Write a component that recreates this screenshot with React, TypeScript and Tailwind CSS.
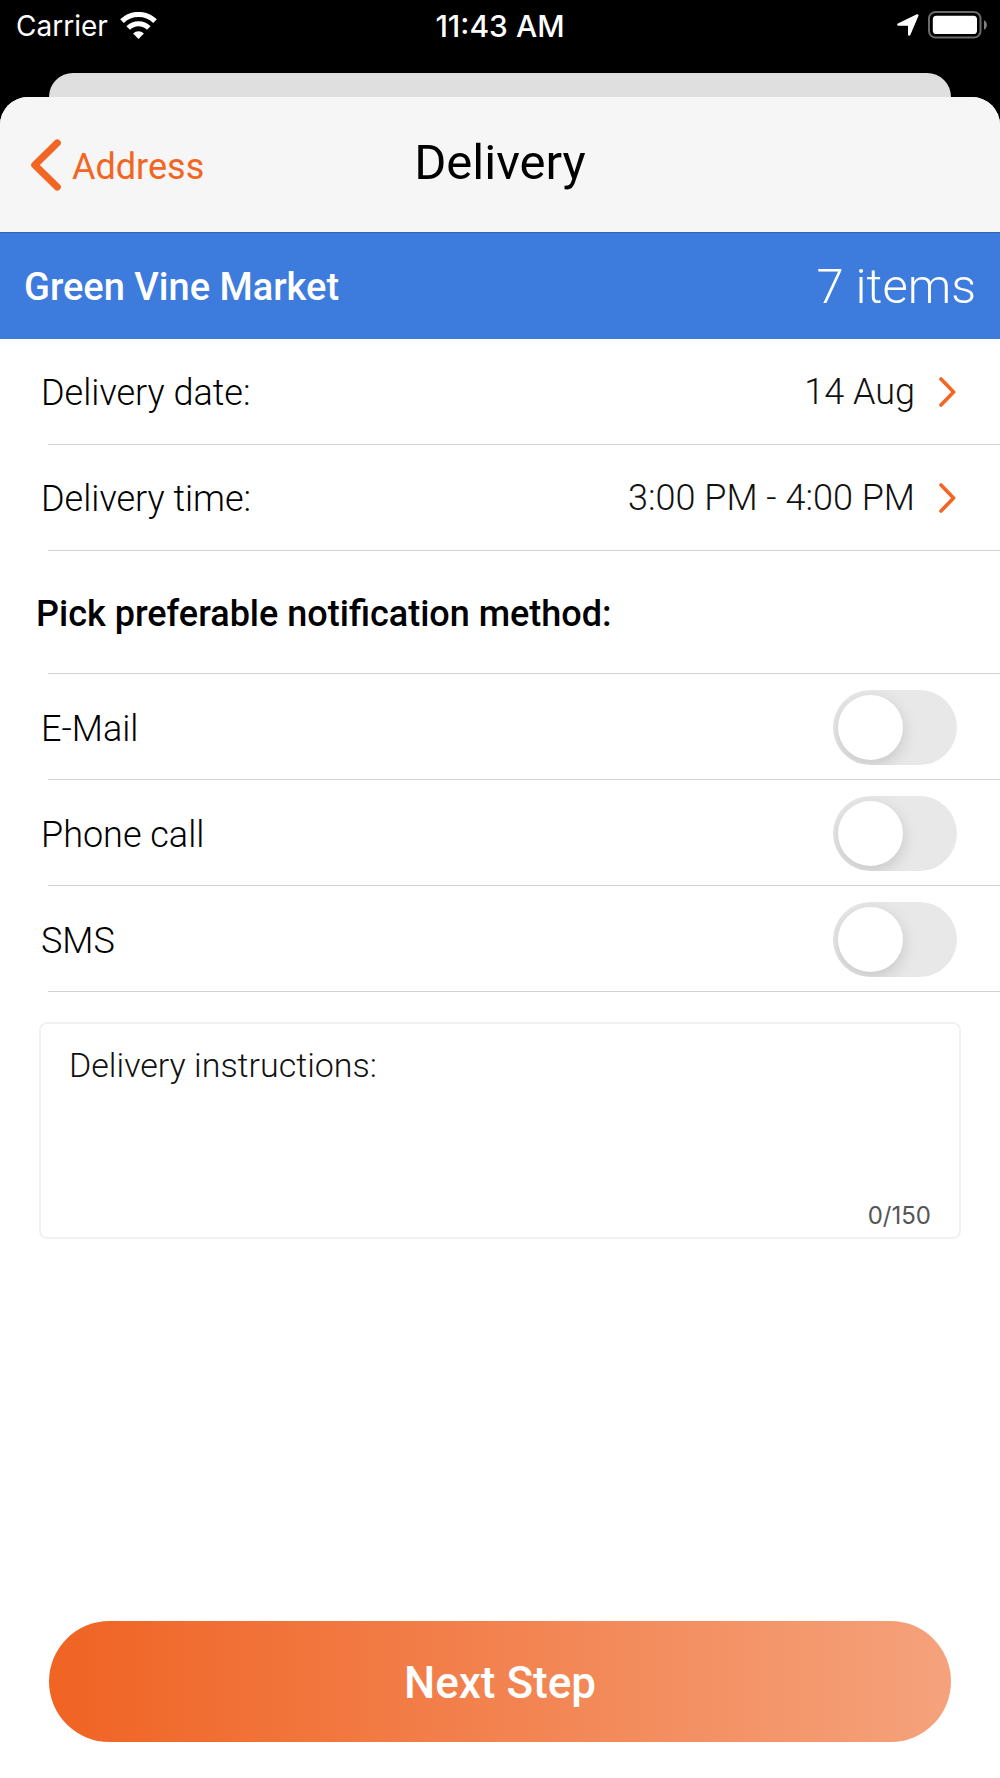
import { useState } from "react";

const ROBOTO = "font-['Roboto',sans-serif]";
const INTER = "font-['Inter',sans-serif]";

type Method = "email" | "phone" | "sms";

const METHODS: { id: Method; label: string }[] = [
  { id: "email", label: "E-Mail" },
  { id: "phone", label: "Phone call" },
  { id: "sms", label: "SMS" },
];

const MAX_LENGTH = 150;

function WifiIcon() {
  return (
    <svg width="37" height="27" viewBox="0 0 37 27" fill="none" aria-hidden="true">
      <path d="M2 9.2a23.6 23.6 0 0 1 33 0" stroke="#fff" strokeWidth="5.2" />
      <path d="M8.2 16.1a14.6 14.6 0 0 1 20.6 0" stroke="#fff" strokeWidth="5" />
      <path d="M18.5 27l-5.4-5.6a7.8 7.8 0 0 1 10.8 0z" fill="#fff" />
    </svg>
  );
}

function LocationIcon() {
  return (
    <svg width="24" height="24" viewBox="0 0 24 24" aria-hidden="true">
      <path
        d="M21.4 2.4L13.2 21.6V12.2L12 11.6H2.4z"
        fill="#fff"
        stroke="#fff"
        strokeWidth="2.4"
        strokeLinejoin="round"
      />
    </svg>
  );
}

function BatteryIcon() {
  return (
    <svg width="60" height="28" viewBox="0 0 60 28" aria-hidden="true">
      <rect x="1" y="1" width="51.5" height="25.5" rx="6.5" fill="none" stroke="#6b6b6b" strokeWidth="2" />
      <rect x="4.8" y="4.8" width="44.2" height="18.2" rx="3.6" fill="#fff" />
      <path d="M56 9.2c3.8 1.8 3.8 7.8 0 9.6z" fill="#808080" />
    </svg>
  );
}

function StatusBar() {
  return (
    <div
      className={`grid h-[50px] grid-cols-[1fr_auto_1fr] items-center px-3 text-[28px] leading-8 text-white ${INTER}`}
    >
      <div className="flex items-center gap-3 pl-1">
        <span className="pt-0.5">Carrier</span>
        <WifiIcon />
      </div>
      <span className="pt-0.5 text-[30px] font-medium">11:43 AM</span>
      <div className="flex items-center justify-end gap-2">
        <LocationIcon />
        <BatteryIcon />
      </div>
    </div>
  );
}

function DetailRow({ label, value }: { label: string; value: string }) {
  return (
    <>
      <button
        type="button"
        className="flex h-[105px] w-full items-center justify-between pr-11 pl-[41px] text-[36px] font-light"
      >
        <span className="pt-0.5">{label}</span>
        <span className="flex items-center gap-6 text-[#111]">
          {value}
          <svg width="17" height="30" viewBox="0 0 17 30" fill="none" aria-hidden="true">
            <path
              d="M2 2l12.6 13L2 28"
              stroke="#f26522"
              strokeWidth="3.6"
              strokeLinecap="round"
              strokeLinejoin="round"
            />
          </svg>
        </span>
      </button>
      <hr className="ml-12 border-[#d2d2d2]" />
    </>
  );
}

function ToggleRow({
  label,
  checked,
  onChange,
}: {
  label: string;
  checked: boolean;
  onChange: (next: boolean) => void;
}) {
  return (
    <>
      <label className="flex h-[105px] cursor-pointer items-center justify-between pt-0.5 pr-[43px] pl-[41px] text-[36px] font-light">
        <span className="pt-0.5">{label}</span>
        <input
          type="checkbox"
          role="switch"
          checked={checked}
          onChange={(e) => onChange(e.target.checked)}
          className="h-[75px] w-[124px] appearance-none overflow-hidden rounded-full bg-[#e8e8e8] p-[5px] before:block before:size-[65px] before:rounded-full before:bg-white before:shadow-[0_5px_16px_rgba(0,0,0,0.15)] before:transition-transform checked:bg-[#f26522] checked:before:translate-x-[49px]"
        />
      </label>
      <hr className="ml-12 border-[#d2d2d2]" />
    </>
  );
}

export default function App() {
  const [methods, setMethods] = useState<Record<Method, boolean>>({
    email: false,
    phone: false,
    sms: false,
  });
  const [instructions, setInstructions] = useState("");

  return (
    <div className={`flex min-h-screen flex-col bg-black text-black ${ROBOTO}`}>
      <StatusBar />

      {/* edge of the screen stacked underneath */}
      <div className="mx-[49px] mt-[23px] h-6 rounded-t-[24px] bg-[#dfdfdf]" />

      <main className="flex flex-1 flex-col overflow-hidden rounded-t-[28px] bg-white">
        <header className="grid h-[135px] grid-cols-[1fr_auto_1fr] items-center bg-[#f6f6f6] px-[30px]">
          <a href="#address" className="flex items-center gap-[11px] text-[36px] text-[#f26522]">
            <svg width="31" height="52" viewBox="0 0 31 52" fill="none" aria-hidden="true">
              <path
                d="M27.2 4L4.8 26l22.4 22"
                stroke="currentColor"
                strokeWidth="7.2"
                strokeLinecap="round"
                strokeLinejoin="round"
              />
            </svg>
            <span className="pt-1">Address</span>
          </a>
          <h1 className="pb-1 text-[49px]">Delivery</h1>
        </header>

        <section className="flex h-[107px] items-center justify-between border-t border-[#2f66b4] bg-[#3d7cdd] px-6 pt-0.5 text-white">
          <h2 className="text-[38px] font-medium">Green Vine Market</h2>
          <span className="text-[49px] font-light">7 items</span>
        </section>

        <DetailRow label="Delivery date:" value="14 Aug" />
        <DetailRow label="Delivery time:" value="3:00 PM - 4:00 PM" />

        <h3 className="flex h-[122px] items-center pt-1 pl-9 text-[36px] font-medium">
          Pick preferable notification method:
        </h3>
        <hr className="ml-12 border-[#d2d2d2]" />

        {METHODS.map((m) => (
          <ToggleRow
            key={m.id}
            label={m.label}
            checked={methods[m.id]}
            onChange={(next) => setMethods({ ...methods, [m.id]: next })}
          />
        ))}

        <div className="mx-[39px] mt-[30px] flex h-[217px] flex-col rounded-lg border-2 border-[#f1f1f1] px-7 pt-5 pb-[5px]">
          <label htmlFor="instructions" className="text-[34px] leading-[42px] font-light text-[#111]">
            Delivery instructions:
          </label>
          <textarea
            id="instructions"
            maxLength={MAX_LENGTH}
            value={instructions}
            onChange={(e) => setInstructions(e.target.value)}
            className="min-h-0 flex-1 resize-none text-[28px] font-light outline-none"
          />
          <span className={`self-end text-[24px] leading-8 text-[#555] ${INTER}`}>
            {instructions.length}/{MAX_LENGTH}
          </span>
        </div>

        <button
          type="button"
          className="mx-[49px] mt-auto mb-9 h-[121px] shrink-0 rounded-full bg-linear-to-r/srgb from-[#f06323] to-[#f5a27c] pt-0.5 text-[44px] font-medium text-white"
        >
          Next Step
        </button>
      </main>
    </div>
  );
}
